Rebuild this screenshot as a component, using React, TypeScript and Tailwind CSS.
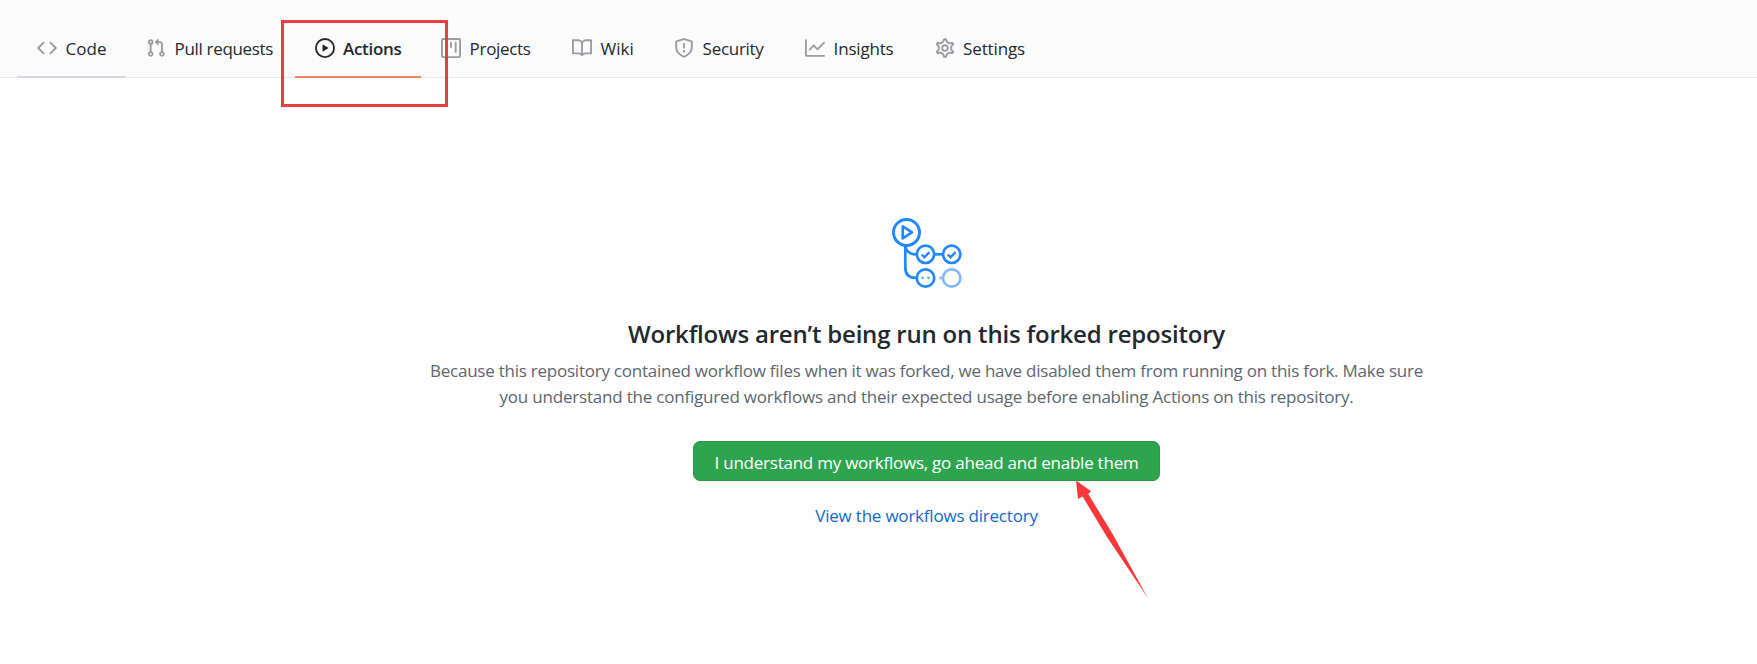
import type { ReactNode } from "react";

type Tab = {
  label: string;
  width: string;
  tracking: string;
  icon: ReactNode;
  state?: "hovered" | "active";
};

const GEAR =
  "M7.429 1.525a6.593 6.593 0 011.142 0c.036.003.108.036.137.146l.289 1.105c.147.56.55.967.997 1.189.174.086.341.183.501.29.417.278.97.423 1.53.27l1.102-.303c.11-.03.175.016.195.046.219.31.41.641.573.989.014.031.022.11-.059.19l-.815.806c-.411.406-.562.957-.53 1.456a4.588 4.588 0 010 .582c-.032.499.119 1.05.53 1.456l.815.806c.08.08.073.159.059.19a6.494 6.494 0 01-.573.99c-.02.029-.086.074-.195.045l-1.103-.303c-.559-.153-1.112-.008-1.529.27-.16.107-.327.204-.5.29-.449.222-.851.628-.998 1.189l-.289 1.105c-.029.11-.101.143-.137.146a6.613 6.613 0 01-1.142 0c-.036-.003-.108-.037-.137-.146l-.289-1.105c-.147-.56-.55-.967-.997-1.189a4.502 4.502 0 01-.501-.29c-.417-.278-.97-.423-1.53-.27l-1.102.303c-.11.03-.175-.016-.195-.046a6.492 6.492 0 01-.573-.989c-.014-.031-.022-.11.059-.19l.815-.806c.411-.406.562-.957.53-1.456a4.587 4.587 0 010-.582c.032-.499-.119-1.05-.53-1.456l-.815-.806c-.08-.08-.073-.159-.059-.19a6.44 6.44 0 01.573-.99c.02-.029.086-.075.195-.045l1.103.303c.559.153 1.112.008 1.529-.27.16-.107.327-.204.5-.29.449-.222.851-.628.998-1.189l.289-1.105c.029-.11.101-.143.137-.146z";

const tabs: Tab[] = [
  {
    label: "Code",
    width: "w-[109px]",
    tracking: "",
    state: "hovered",
    icon: (
      <path d="M4.72 3.22a.75.75 0 011.06 1.06L2.06 8l3.72 3.72a.75.75 0 11-1.06 1.06L.47 8.53a.75.75 0 010-1.06l4.25-4.25zm6.56 0a.75.75 0 10-1.06 1.06L13.94 8l-3.72 3.72a.75.75 0 101.06 1.06l4.25-4.25a.75.75 0 000-1.06l-4.25-4.25z" />
    ),
  },
  {
    label: "Pull requests",
    width: "w-[169px]",
    tracking: "tracking-[-0.33px]",
    icon: (
      <path d="M7.177 3.073L9.573.677A.25.25 0 0110 .854v4.792a.25.25 0 01-.427.177L7.177 3.427a.25.25 0 010-.354zM3.75 2.5a.75.75 0 100 1.5.75.75 0 000-1.5zm-2.25.75a2.25 2.25 0 113 2.122v5.256a2.251 2.251 0 11-1.5 0V5.372A2.25 2.25 0 011.5 3.25zM11 2.5h-1V4h1a1 1 0 011 1v5.628a2.251 2.251 0 101.5 0V5A2.5 2.5 0 0011 2.5zm1 10.25a.75.75 0 111.5 0 .75.75 0 01-1.5 0zM3.75 12a.75.75 0 100 1.5.75.75 0 000-1.5z" />
    ),
  },
  {
    label: "Actions",
    width: "w-[126px]",
    tracking: "tracking-[-0.3px]",
    state: "active",
    icon: (
      <path d="M1.5 8a6.5 6.5 0 1113 0 6.5 6.5 0 01-13 0zM8 0a8 8 0 100 16A8 8 0 008 0zM6.379 5.227A.25.25 0 006 5.442v5.117a.25.25 0 00.379.214l4.264-2.559a.25.25 0 000-.428L6.379 5.227z" />
    ),
  },
  {
    label: "Projects",
    width: "w-[131px]",
    tracking: "tracking-[-0.31px]",
    icon: (
      <path d="M1.75 0A1.75 1.75 0 000 1.75v12.5C0 15.216.784 16 1.75 16h12.5A1.75 1.75 0 0016 14.25V1.75A1.75 1.75 0 0014.25 0H1.75zM1.5 1.75a.25.25 0 01.25-.25h12.5a.25.25 0 01.25.25v12.5a.25.25 0 01-.25.25H1.75a.25.25 0 01-.25-.25V1.75zM11.75 3a.75.75 0 00-.75.75v7.5a.75.75 0 001.5 0v-7.5a.75.75 0 00-.75-.75zm-8.25.75a.75.75 0 011.5 0v5.5a.75.75 0 01-1.5 0v-5.5zM8 3a.75.75 0 00-.75.75v3.5a.75.75 0 001.5 0v-3.5A.75.75 0 008 3z" />
    ),
  },
  {
    label: "Wiki",
    width: "w-[102px]",
    tracking: "",
    icon: (
      <path d="M0 1.75A.75.75 0 01.75 1h4.253c1.227 0 2.317.59 3 1.501A3.744 3.744 0 0111.006 1h4.245a.75.75 0 01.75.75v10.5a.75.75 0 01-.75.75h-4.507a2.25 2.25 0 00-1.591.659l-.622.621a.75.75 0 01-1.06 0l-.622-.621A2.25 2.25 0 005.258 13H.75a.75.75 0 01-.75-.75V1.75zm8.755 3a2.25 2.25 0 012.25-2.25H14.5v9h-3.757c-.71 0-1.4.201-1.992.572l.004-7.322zm-1.504 7.324l.004-5.073-.002-2.253A2.25 2.25 0 005.003 2.5H1.5v9h3.757a3.75 3.75 0 011.994.574z" />
    ),
  },
  {
    label: "Security",
    width: "w-[131px]",
    tracking: "tracking-[-0.28px]",
    icon: (
      <path d="M7.467.133a1.75 1.75 0 011.066 0l5.25 1.68A1.75 1.75 0 0115 3.48V7c0 1.566-.32 3.182-1.303 4.682-.983 1.498-2.585 2.813-5.032 3.855a1.7 1.7 0 01-1.33 0c-2.447-1.042-4.049-2.357-5.032-3.855C1.32 10.182 1 8.566 1 7V3.48a1.75 1.75 0 011.217-1.667l5.25-1.68zm.61 1.429a.25.25 0 00-.153 0l-5.25 1.68a.25.25 0 00-.174.238V7c0 1.358.275 2.666 1.057 3.86.784 1.194 2.121 2.34 4.366 3.297a.2.2 0 00.154 0c2.245-.956 3.582-2.104 4.366-3.298C13.225 9.666 13.5 8.36 13.5 7V3.48a.25.25 0 00-.174-.237l-5.25-1.68zM9 10.5a1 1 0 11-2 0 1 1 0 012 0zm-.25-5.75a.75.75 0 10-1.5 0v3a.75.75 0 001.5 0v-3z" />
    ),
  },
  {
    label: "Insights",
    width: "w-[129.5px]",
    tracking: "tracking-[-0.18px]",
    icon: (
      <path d="M1.5 1.75a.75.75 0 00-1.5 0v12.5c0 .414.336.75.75.75h14.5a.75.75 0 000-1.5H1.5V1.75zm14.28 2.53a.75.75 0 00-1.06-1.06L10 7.94 7.53 5.47a.75.75 0 00-1.06 0L3.22 8.72a.75.75 0 001.06 1.06L7 7.06l2.47 2.47a.75.75 0 001.06 0l5.25-5.25z" />
    ),
  },
  {
    label: "Settings",
    width: "w-[131px]",
    tracking: "tracking-[-0.14px]",
    icon: (
      <g fill="none" stroke="currentColor" strokeWidth="1.4">
        <path d={GEAR} transform="translate(8 8) scale(1.1) translate(-8 -8)" />
        <circle cx="8" cy="8" r="2.25" strokeWidth="1.5" />
      </g>
    ),
  },
];

function TabItem({ tab }: { tab: Tab }) {
  const active = tab.state === "active";
  const underline = active
    ? "border-[#f0836d]"
    : tab.state === "hovered"
      ? "border-[#d3d9de]"
      : "border-transparent";
  return (
    <a
      className={`flex h-[60px] shrink-0 items-center gap-2 border-b-2 pt-0.5 pl-5 ${tab.width} ${underline}`}
    >
      <svg
        viewBox="0 0 16 16"
        fill="currentColor"
        fillRule="evenodd"
        className={`size-5 shrink-0 overflow-visible ${active ? "text-[#24292e]" : "text-[#9a9c9f]"}`}
      >
        {tab.icon}
      </svg>
      <span
        className={`pt-px text-[17px] leading-[26px] whitespace-nowrap text-[#24292e] ${tab.tracking} ${active ? "font-semibold" : "pl-[0.6px]"}`}
      >
        {tab.label}
      </span>
    </a>
  );
}

function ActionsLogo() {
  return (
    <svg width="80" height="80" viewBox="887 210 80 80" fill="none" stroke="#2188ff" strokeWidth="2.7">
      <circle cx="906.5" cy="232.4" r="13" strokeWidth="3" />
      <path d="M902.7 226.4v12l9.3-6z" strokeWidth="2.6" strokeLinejoin="round" />
      <path d="M905.3 246v21.5q0 10.4 10.4 10.4h1M905.3 246q1.5 8.3 10 8.3h1.4" />
      <path d="M934.5 254.3h8.5" />
      <circle cx="925.5" cy="254.3" r="8.7" />
      <circle cx="951.7" cy="254.3" r="8.7" />
      <circle cx="925.5" cy="278" r="8.7" />
      <path d="M921.6 254.5l2.8 2.8 5-5.2M947.8 254.5l2.8 2.8 5-5.2" strokeWidth="2.3" />
      <g fill="#6fabf5" stroke="none">
        <circle cx="922.6" cy="277.8" r="1.4" />
        <circle cx="928.4" cy="277.8" r="1.4" />
      </g>
      <g stroke="#86b8f8">
        <circle cx="951.7" cy="278" r="8.7" />
        <path d="M939.5 278h3.5" />
      </g>
    </svg>
  );
}

export default function App() {
  return (
    <div className="relative h-[664px] w-full overflow-hidden bg-[#fefefe] font-['Open_Sans','Noto_Sans',sans-serif]">
      <header className="flex h-[78px] items-end border-b border-[#e4e8ec] bg-[#fbfbfc] pl-[17px]">
        <nav className="-mb-px flex">
          {tabs.map((tab) => (
            <TabItem key={tab.label} tab={tab} />
          ))}
        </nav>
      </header>

      <main className="flex flex-col items-center pt-[132px] pl-[96px] text-center text-[17px]">
        <ActionsLogo />
        <h1 className="mt-[26px] text-[24px] leading-9 font-semibold tracking-[-0.2px] whitespace-nowrap text-[#24292e]">
          Workflows aren’t being run on this forked repository
        </h1>
        <p className="mt-1.5 leading-[26px] whitespace-nowrap text-[#5f666e]">
          <span className="tracking-[-0.238px]">
            Because this repository contained workflow files when it was forked, we have disabled them
            from running on this fork. Make sure
          </span>
          <br />
          <span className="tracking-[-0.203px]">
            you understand the configured workflows and their expected usage before enabling Actions on
            this repository.
          </span>
        </p>
        <button className="mt-[31px] flex h-10 w-[467px] items-center justify-center rounded-[7px] border border-[#2a9a48] bg-[#2ea44f] pt-[3px] tracking-[-0.24px] whitespace-nowrap text-white">
          I understand my workflows, go ahead and enable them
        </button>
        <a className="mt-[22px] leading-[26px] tracking-[-0.21px] text-[#1269ca]">
          View the workflows directory
        </a>
      </main>

      <div className="pointer-events-none absolute top-5 left-[281px] h-[87px] w-[167px] border-3 border-[#e8403f]" />
      <svg
        className="pointer-events-none absolute top-[480px] left-[1070px]"
        width="84"
        height="124"
        viewBox="1070 480 84 124"
        fill="#fb3638"
      >
        <path d="M1076 480.5L1091 491.3L1088.2 494L1112 533L1148 598.3L1107 537L1082.6 496.5L1078 499z" />
      </svg>
    </div>
  );
}
